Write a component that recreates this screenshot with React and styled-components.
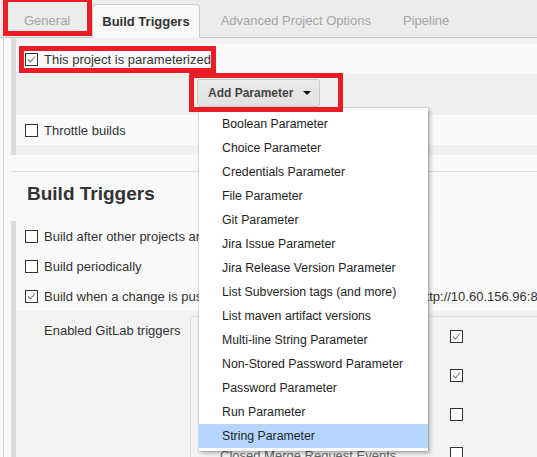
import React from "react"
import styled, { createGlobalStyle, css } from "styled-components"

const GlobalStyle = createGlobalStyle`
  html, body {
    margin: 0;
    padding: 0;
  }
  body {
    width: 537px;
    height: 457px;
    overflow: hidden;
    background: #f9f9f9;
    font-family: "Liberation Sans", Arial, sans-serif;
    font-size: 13px;
    color: #333;
  }
`

const params = [
  "Boolean Parameter",
  "Choice Parameter",
  "Credentials Parameter",
  "File Parameter",
  "Git Parameter",
  "Jira Issue Parameter",
  "Jira Release Version Parameter",
  "List Subversion tags (and more)",
  "List maven artifact versions",
  "Multi-line String Parameter",
  "Non-Stored Password Parameter",
  "Password Parameter",
  "Run Parameter",
  "String Parameter",
]

const gitlabTriggers = [
  { label: "Push Events", on: true },
  { label: "Opened Merge Request Events", on: true },
  { label: "Accepted Merge Request Events", on: false },
  { label: "Closed Merge Request Events", on: false },
]

const Checkbox = ({ checked }) => (
  <Box>
    {checked && (
      <svg width="11" height="11" viewBox="0 0 11 11">
        <polyline
          points="2,5.5 4.5,8 9,2.5"
          fill="none"
          stroke="#777"
          strokeWidth="1.1"
        />
      </svg>
    )}
  </Box>
)

const App = () => (
  <Page>
    <GlobalStyle />
    <TabBar>
      <Tab>General</Tab>
      <Tab $active>Build Triggers</Tab>
      <Tab>Advanced Project Options</Tab>
      <Tab>Pipeline</Tab>
    </TabBar>

    <Main>
      <Section $pad="6px 0 10px">
        <Row>
          <Checkbox checked />
          This project is parameterized
        </Row>
        <ButtonRow>
          <Dropdown>
            <AddButton>
              Add Parameter
              <Caret />
            </AddButton>
            <Menu>
              {params.map(p => (
                <MenuItem key={p} $hover={p === "String Parameter"}>
                  {p}
                </MenuItem>
              ))}
            </Menu>
          </Dropdown>
        </ButtonRow>
        <Row>
          <Checkbox />
          Throttle builds
        </Row>
      </Section>

      <Heading>Build Triggers</Heading>

      <Section>
        <Row>
          <Checkbox />
          Build after other projects are built
        </Row>
        <Row>
          <Checkbox />
          Build periodically
        </Row>
        <Row>
          <Checkbox checked />
          Build when a change is pushed to GitLab. GitLab webhook URL:
          http://10.60.156.96:8080/project/demo
        </Row>
        <Nested>
          <NestedLabel>Enabled GitLab triggers</NestedLabel>
          <TriggerTable>
            {gitlabTriggers.map(t => (
              <TriggerRow key={t.label}>
                <TriggerName>{t.label}</TriggerName>
                <Checkbox checked={t.on} />
              </TriggerRow>
            ))}
          </TriggerTable>
        </Nested>
      </Section>
    </Main>

    <Mark $x={3} $y={-3} $w={89} $h={39} />
    <Mark $x={19} $y={46} $w={197} $h={27} />
    <Mark $x={189} $y={73} $w={154} $h={39} />
  </Page>
)

const Page = styled.div`
  position: relative;
  width: 537px;
  height: 457px;
  overflow: hidden;
`

const TabBar = styled.div`
  display: flex;
  align-items: flex-end;
  height: 37px;
  padding-left: 8px;
  background: #ececec;
  border-bottom: 1px solid #cbcbcb;
`

const Tab = styled.div`
  height: 33px;
  line-height: 33px;
  padding: 0 16px;
  color: #a5a5a5;
  white-space: nowrap;

  ${p =>
    p.$active &&
    css`
      height: 33px;
      margin: 0 5px -1px 6px;
      padding: 0 9px;
      border: 1px solid #cbcbcb;
      border-bottom: none;
      border-radius: 4px 4px 0 0;
      background: #f8f8f8;
      color: #333;
      font-weight: bold;
    `}
`

const Main = styled.div`
  margin-left: 3px;
  border-left: 1px solid #d2d2d2;
  height: 420px;
`

const Section = styled.div`
  margin-left: 7px;
  border-left: 5px solid #dcdcdc;
  background: #f0f0f0;
  padding: ${p => p.$pad || "0"};
`

const Row = styled.div`
  display: flex;
  align-items: center;
  gap: 6px;
  height: 30px;
  padding-left: 9px;
  background: #fafafa;
  white-space: nowrap;
`

const Box = styled.span`
  flex: none;
  display: inline-flex;
  align-items: center;
  justify-content: center;
  width: 13px;
  height: 13px;
  box-sizing: border-box;
  border: 1px solid #333;
  background: #fff;
`

const ButtonRow = styled.div`
  padding: 5px 0 8px 181px;
`

const Dropdown = styled.div`
  position: relative;
  display: inline-block;
`

const AddButton = styled.div`
  display: inline-flex;
  align-items: center;
  gap: 10px;
  height: 28px;
  box-sizing: border-box;
  padding: 0 8px 0 10px;
  border: 1px solid #c8c8c8;
  border-radius: 3px;
  background: linear-gradient(#ebebeb, #e1e1e1);
  color: #444;
  font-size: 12px;
  font-weight: bold;
`

const Caret = styled.span`
  width: 0;
  height: 0;
  border-left: 4px solid transparent;
  border-right: 4px solid transparent;
  border-top: 4px solid #111;
`

const Menu = styled.ul`
  position: absolute;
  left: 2px;
  top: 29px;
  z-index: 5;
  width: 229px;
  margin: 0;
  padding: 4px 0 3px;
  list-style: none;
  background: #fff;
  box-shadow: 0 0 0 1px rgba(0, 0, 0, 0.07), 2px 2px 4px rgba(0, 0, 0, 0.3);
`

const MenuItem = styled.li`
  height: 24px;
  line-height: 24px;
  padding-left: 23px;
  font-size: 12.3px;
  color: #1e1e1e;
  white-space: nowrap;
  background: ${p => (p.$hover ? "#b4d5fd" : "transparent")};
`

const Heading = styled.h2`
  margin: 16px 0 0 7px;
  padding: 10px 0 15px 16px;
  border-top: 1px solid #dcdcdc;
  font-size: 19px;
  line-height: 24px;
  font-weight: bold;
  color: #333;
`

const Nested = styled.div`
  display: flex;
  padding-top: 5px;
  background: #f3f3f3;
  height: 200px;
`

const NestedLabel = styled.div`
  width: 146px;
  padding: 7px 0 0 28px;
  line-height: 16px;
`

const TriggerTable = styled.div`
  flex: 1;
  border-left: 1px solid #dedede;
  border-top: 1px solid #dedede;
`

const TriggerRow = styled.div`
  display: flex;
  align-items: center;
  height: 39px;
`

const TriggerName = styled.span`
  width: 230px;
  padding: 4px 0 0 29px;
  color: #666;
  white-space: nowrap;
`

const Mark = styled.div`
  position: absolute;
  left: ${p => p.$x}px;
  top: ${p => p.$y}px;
  width: ${p => p.$w}px;
  height: ${p => p.$h}px;
  box-sizing: border-box;
  border: 5px solid #ec1c24;
  z-index: 10;
  pointer-events: none;
`

export default App
